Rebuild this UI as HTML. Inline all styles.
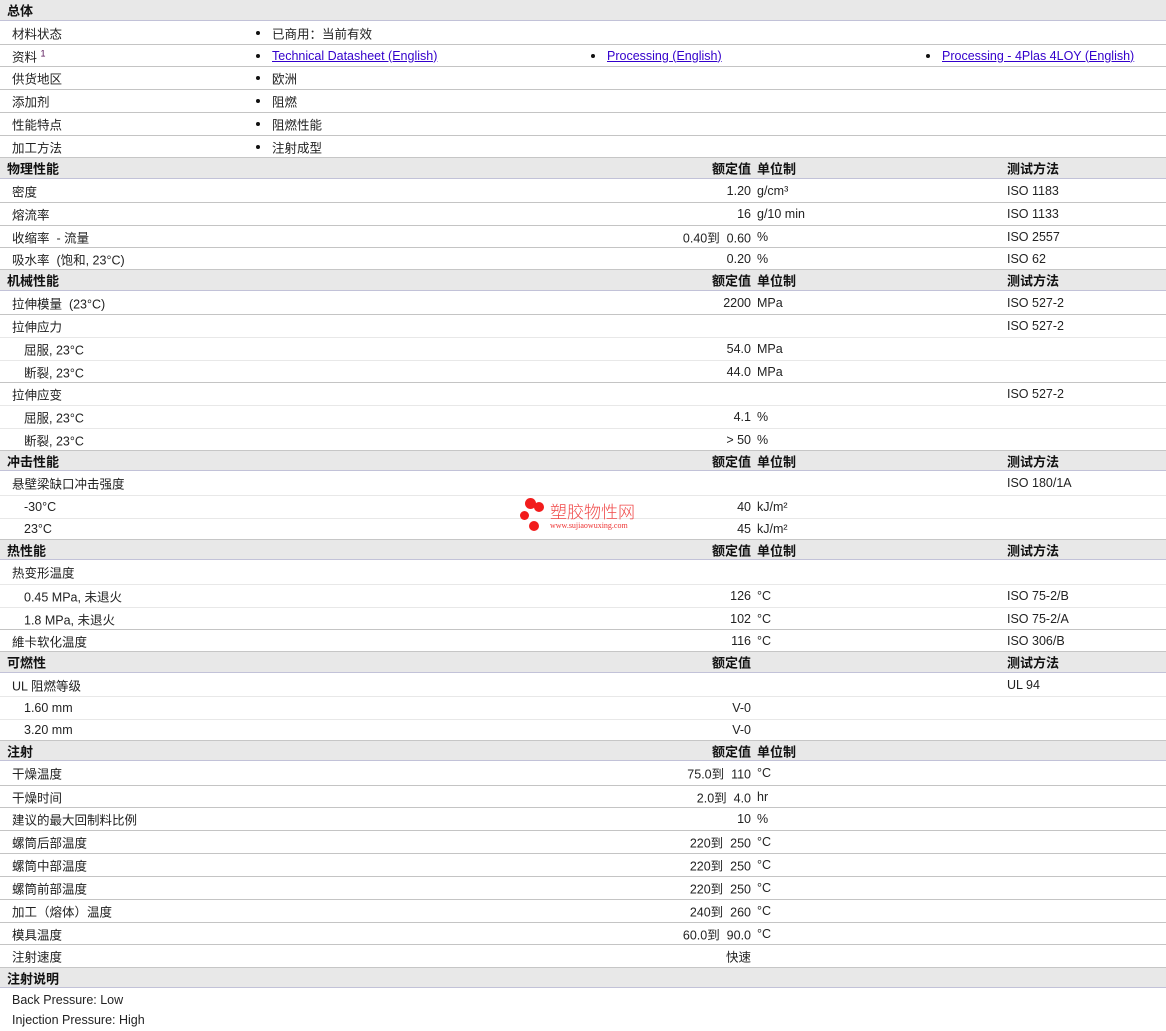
<!DOCTYPE html>
<html><head><meta charset="utf-8">
<style>
html,body{margin:0;padding:0;background:#fff;}
body{width:1166px;height:1031px;position:relative;overflow:hidden;font-family:"Liberation Sans","Noto Sans CJK SC","WenQuanYi Zen Hei",sans-serif;font-size:12.5px;color:#222;}
.r,.h{position:absolute;left:0;width:1166px;box-sizing:border-box;}
.r{border-top:1px solid #c4c4c4;}
.r.s{border-top:1px solid #e8e8e8;}
.h{background:#e8e8e8;border-top:1px solid #c6c6c6;border-bottom:1px solid #c2c2d8;font-weight:bold;font-size:13px;color:#111;}
.r span,.h span{position:absolute;top:50%;transform:translateY(-50%);white-space:nowrap;}
.l{left:12px}.li{left:24px}.hl{left:7px}
.v{right:415px;text-align:right}
.u{left:757px}.t{left:1007px}
.b{width:4px;height:4px;border-radius:50%;background:#111;}
a{color:#3300cc;text-decoration:underline;}
.wm{position:absolute;left:520px;top:498px;}
.dot{position:absolute;background:#f21c1c;border-radius:50%;}
</style></head><body>

<div class="h" style="top:0;height:21px;border-top:none"><span class="hl">总体</span></div>
<div class="r" style="top:21px;height:23px;border-top:none"><span class="l">材料状态</span><span class="b" style="left:256px"></span><span style="left:272px">已商用：当前有效</span></div>
<div class="r" style="top:44px;height:22px"><span class="l">资料 <sup style="font-size:9px;color:#515">1</sup></span><span class="b" style="left:256px"></span><span style="left:272px"><a>Technical Datasheet (English)</a></span><span class="b" style="left:591px"></span><span style="left:607px"><a>Processing (English)</a></span><span class="b" style="left:926px"></span><span style="left:942px"><a>Processing - 4Plas 4LOY (English)</a></span></div>
<div class="r" style="top:66px;height:23px"><span class="l">供货地区</span><span class="b" style="left:256px"></span><span style="left:272px">欧洲</span></div>
<div class="r" style="top:89px;height:23px"><span class="l">添加剂</span><span class="b" style="left:256px"></span><span style="left:272px">阻燃</span></div>
<div class="r" style="top:112px;height:23px"><span class="l">性能特点</span><span class="b" style="left:256px"></span><span style="left:272px">阻燃性能</span></div>
<div class="r" style="top:135px;height:22px"><span class="l">加工方法</span><span class="b" style="left:256px"></span><span style="left:272px">注射成型</span></div>

<div class="h" style="top:157px;height:22px"><span class="hl">物理性能</span><span class="v">额定值</span><span class="u">单位制</span><span class="t">测试方法</span></div>
<div class="r" style="top:179px;height:23px;border-top:none"><span class="l">密度</span><span class="v">1.20</span><span class="u">g/cm³</span><span class="t">ISO 1183</span></div>
<div class="r" style="top:202px;height:23px"><span class="l">熔流率</span><span class="v">16</span><span class="u">g/10 min</span><span class="t">ISO 1133</span></div>
<div class="r" style="top:225px;height:22px"><span class="l">收缩率 &nbsp;- 流量</span><span class="v">0.40到 &nbsp;0.60</span><span class="u">%</span><span class="t">ISO 2557</span></div>
<div class="r" style="top:247px;height:22px"><span class="l">吸水率 &nbsp;(饱和, 23°C)</span><span class="v">0.20</span><span class="u">%</span><span class="t">ISO 62</span></div>

<div class="h" style="top:269px;height:22px"><span class="hl">机械性能</span><span class="v">额定值</span><span class="u">单位制</span><span class="t">测试方法</span></div>
<div class="r" style="top:291px;height:23px;border-top:none"><span class="l">拉伸模量 &nbsp;(23°C)</span><span class="v">2200</span><span class="u">MPa</span><span class="t">ISO 527-2</span></div>
<div class="r" style="top:314px;height:23px"><span class="l">拉伸应力</span><span class="t">ISO 527-2</span></div>
<div class="r s" style="top:337px;height:23px"><span class="li">屈服, 23°C</span><span class="v">54.0</span><span class="u">MPa</span></div>
<div class="r s" style="top:360px;height:22px"><span class="li">断裂, 23°C</span><span class="v">44.0</span><span class="u">MPa</span></div>
<div class="r" style="top:382px;height:23px"><span class="l">拉伸应变</span><span class="t">ISO 527-2</span></div>
<div class="r s" style="top:405px;height:23px"><span class="li">屈服, 23°C</span><span class="v">4.1</span><span class="u">%</span></div>
<div class="r s" style="top:428px;height:22px"><span class="li">断裂, 23°C</span><span class="v">&gt; 50</span><span class="u">%</span></div>

<div class="h" style="top:450px;height:21px"><span class="hl">冲击性能</span><span class="v">额定值</span><span class="u">单位制</span><span class="t">测试方法</span></div>
<div class="r" style="top:471px;height:24px;border-top:none"><span class="l">悬壁梁缺口冲击强度</span><span class="t">ISO 180/1A</span></div>
<div class="r s" style="top:495px;height:23px"><span class="li">-30°C</span><span class="v">40</span><span class="u">kJ/m²</span></div>
<div class="r s" style="top:518px;height:21px"><span class="li">23°C</span><span class="v">45</span><span class="u">kJ/m²</span></div>

<div class="h" style="top:539px;height:21px"><span class="hl">热性能</span><span class="v">额定值</span><span class="u">单位制</span><span class="t">测试方法</span></div>
<div class="r" style="top:560px;height:24px;border-top:none"><span class="l">热变形温度</span></div>
<div class="r s" style="top:584px;height:23px"><span class="li">0.45 MPa, 未退火</span><span class="v">126</span><span class="u">°C</span><span class="t">ISO 75-2/B</span></div>
<div class="r s" style="top:607px;height:22px"><span class="li">1.8 MPa, 未退火</span><span class="v">102</span><span class="u">°C</span><span class="t">ISO 75-2/A</span></div>
<div class="r" style="top:629px;height:22px"><span class="l">維卡软化温度</span><span class="v">116</span><span class="u">°C</span><span class="t">ISO 306/B</span></div>

<div class="h" style="top:651px;height:22px"><span class="hl">可燃性</span><span class="v">额定值</span><span class="t">测试方法</span></div>
<div class="r" style="top:673px;height:23px;border-top:none"><span class="l">UL 阻燃等级</span><span class="t">UL 94</span></div>
<div class="r s" style="top:696px;height:23px"><span class="li">1.60 mm</span><span class="v">V-0</span></div>
<div class="r s" style="top:719px;height:21px"><span class="li">3.20 mm</span><span class="v">V-0</span></div>

<div class="h" style="top:740px;height:21px"><span class="hl">注射</span><span class="v">额定值</span><span class="u">单位制</span></div>
<div class="r" style="top:761px;height:24px;border-top:none"><span class="l">干燥温度</span><span class="v">75.0到 &nbsp;110</span><span class="u">°C</span></div>
<div class="r" style="top:785px;height:22px"><span class="l">干燥时间</span><span class="v">2.0到 &nbsp;4.0</span><span class="u">hr</span></div>
<div class="r" style="top:807px;height:23px"><span class="l">建议的最大回制料比例</span><span class="v">10</span><span class="u">%</span></div>
<div class="r" style="top:830px;height:23px"><span class="l">螺筒后部温度</span><span class="v">220到 &nbsp;250</span><span class="u">°C</span></div>
<div class="r" style="top:853px;height:23px"><span class="l">螺筒中部温度</span><span class="v">220到 &nbsp;250</span><span class="u">°C</span></div>
<div class="r" style="top:876px;height:23px"><span class="l">螺筒前部温度</span><span class="v">220到 &nbsp;250</span><span class="u">°C</span></div>
<div class="r" style="top:899px;height:23px"><span class="l">加工（熔体）温度</span><span class="v">240到 &nbsp;260</span><span class="u">°C</span></div>
<div class="r" style="top:922px;height:22px"><span class="l">模具温度</span><span class="v">60.0到 &nbsp;90.0</span><span class="u">°C</span></div>
<div class="r" style="top:944px;height:23px"><span class="l">注射速度</span><span class="v">快速</span></div>

<div class="h" style="top:967px;height:21px"><span class="hl">注射说明</span></div>
<div style="position:absolute;left:12px;top:993px;color:#222">Back Pressure: Low</div>
<div style="position:absolute;left:12px;top:1013px;color:#222">Injection Pressure: High</div>

<div class="wm">
  <div class="dot" style="left:5px;top:0px;width:11px;height:11px"></div>
  <div class="dot" style="left:14px;top:4px;width:10px;height:10px"></div>
  <div class="dot" style="left:0px;top:13px;width:9px;height:9px"></div>
  <div class="dot" style="left:9px;top:23px;width:10px;height:10px"></div>
  <div style="position:absolute;left:30px;top:4px;font-size:17px;color:#f04848;white-space:nowrap;font-family:'Noto Sans CJK SC',sans-serif;line-height:18px;font-weight:300">塑胶物性网</div>
  <div style="position:absolute;left:30px;top:23px;font-size:8px;color:#e33;white-space:nowrap;font-family:'Liberation Serif',serif">www.sujiaowuxing.com</div>
</div>
</body></html>
